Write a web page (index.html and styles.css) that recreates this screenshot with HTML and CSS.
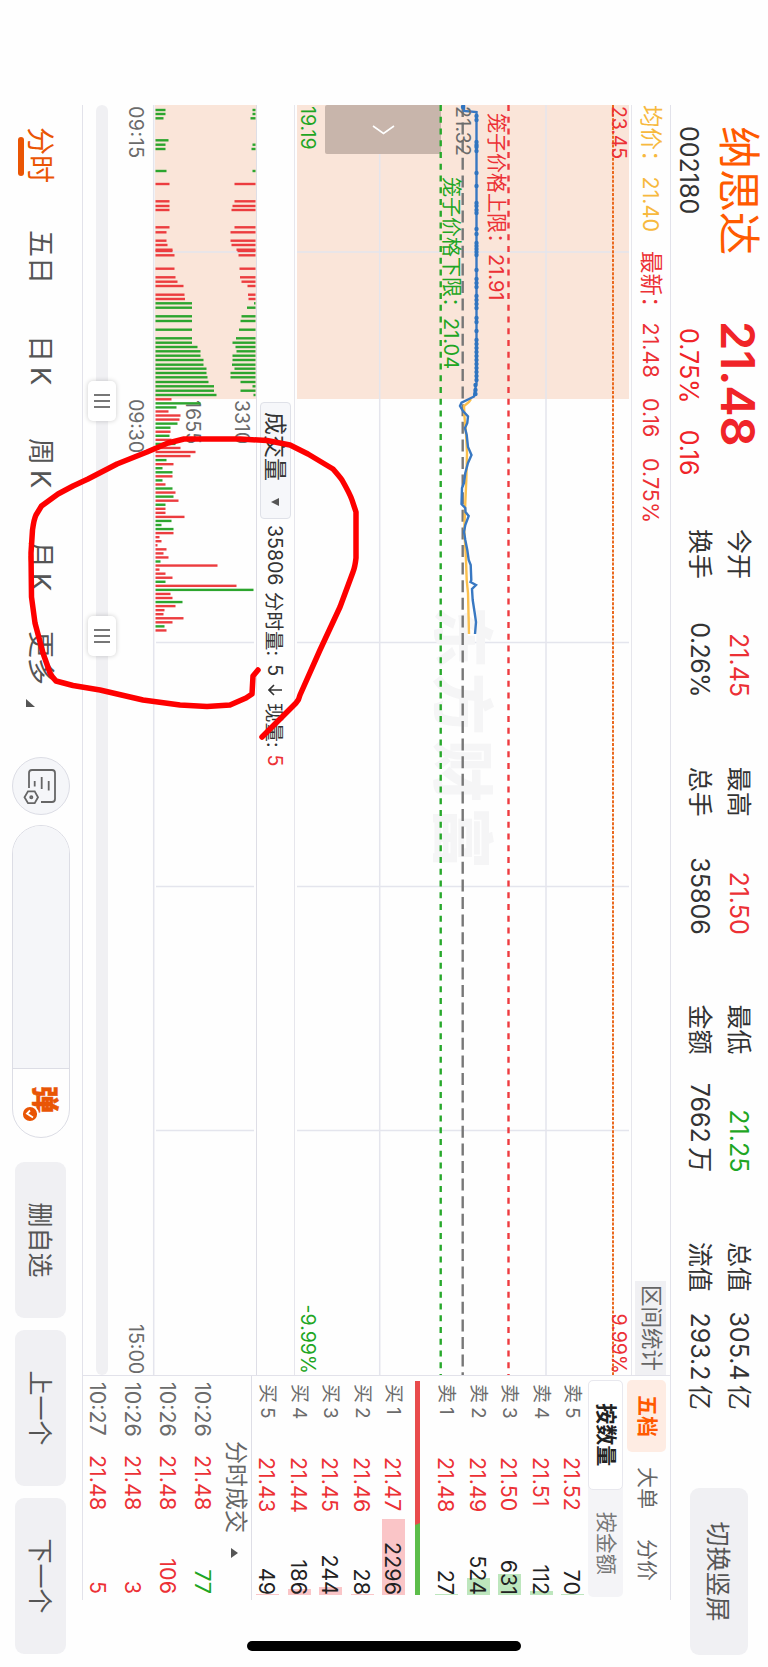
FILE: index.html
```html
<!DOCTYPE html>
<html lang="zh-CN">
<head>
    <meta charset="UTF-8">
    <meta name="viewport" content="width=device-width, initial-scale=1.0">
    <title>纳思达 002180</title>
    <link rel="stylesheet" href="styles.css">
</head>
<body>
    <!-- Landscape screen, turned to fit the portrait page -->
    <div class="screen">
        <header class="header">
            <div class="stock">
                <div class="name">纳思达</div>
                <div class="code">002180</div>
            </div>
            <div class="quote">
                <div class="price">21.48</div>
                <div class="change"><span>0.75%</span><span>0.16</span></div>
            </div>
            <div class="stats">
                <div class="stat"><span>今开</span><span class="red">21.45</span></div>
                <div class="stat"><span>最高</span><span class="red">21.50</span></div>
                <div class="stat"><span>最低</span><span class="green">21.25</span></div>
                <div class="stat"><span>总值</span><span>305.4&thinsp;亿</span></div>
                <div class="stat"><span>换手</span><span class="rate">0.26%</span></div>
                <div class="stat"><span>总手</span><span>35806</span></div>
                <div class="stat"><span>金额</span><span>7662&thinsp;万</span></div>
                <div class="stat"><span>流值</span><span>293.2&thinsp;亿</span></div>
            </div>
            <button class="switchButton">切换竖屏</button>
        </header>

        <main class="main">
            <section class="charts">
                <div class="infoRow">
                    <span class="avg">均价：<b>21.40</b></span>
                    <span class="last">最新：<b>21.48</b></span>
                    <span class="diff">0.16</span>
                    <span class="percent">0.75%</span>
                    <button class="rangeButton">区间统计</button>
                </div>

                <svg class="priceChart" viewBox="105 137 1270 336" width="1270" height="336">
                    <rect x="105" y="139" width="294" height="332" fill="#fae5d9"/>
                    <g class="grid">
                        <path d="M105 222H1375M105 388.3H1375M252 139V471M642.5 139V471M886.5 139V471M1130.5 139V471"/>
                    </g>
                    <text class="watermark" x="606" y="329">东方财富</text>
                    <rect x="105" y="327" width="49" height="116" rx="2" fill="#c8b5ab"/>
                    <path d="M126 374L133.500 384.500L126 395" fill="none" stroke="#fff" stroke-width="1.600"/>
                    <path d="M105 155H1375" stroke="#ea6a1f" stroke-width="2" stroke-dasharray="3 1.400"/>
                    <path d="M105 259.500H1375" stroke="#ee3b3f" stroke-width="2.400" stroke-dasharray="6 5.750"/>
                    <path d="M105 305.300H1375" stroke="#777" stroke-width="2.400" stroke-dasharray="12 5.600"/>
                    <path d="M105 327.300H1375" stroke="#27a82b" stroke-width="2.400" stroke-dasharray="6 5.750"/>
                    <polyline id="avgLine" fill="none" stroke="#fbc04e" stroke-width="2.400"/>
                    <polyline id="priceLine" fill="none" stroke="#3878c2" stroke-width="2.400"/>
                    <g id="priceDots" fill="#2f74c0"></g>
                    <g class="axis">
                        <text class="red" x="106" y="156" textLength="53">23.45</text>
                        <text class="red" x="1374" y="156" text-anchor="end">9.99%</text>
                        <text class="gray" x="106" y="312" textLength="50">21.32</text>
                        <text class="green" x="106" y="467">19.19</text>
                        <text class="green" x="1374" y="467" text-anchor="end">-9.99%</text>
                    </g>
                    <text class="red limit" x="113" y="279">笼子价格上限：</text>
                    <text class="red limit" x="254" y="279">21.91</text>
                    <text class="green limit" x="177" y="324">笼子价格下限：</text>
                    <text class="green limit" x="318" y="324">21.04</text>
                </svg>

                <div class="volumeRow">
                    <button class="indicator">成交量 <i class="down"></i></button>
                    <span class="total">35806</span>
                    <span>分时量:</span>
                    <span class="minute">5</span>
                    <svg width="12" height="14" viewBox="0 0 12 14"><path d="M6 0V13M1 8L6 13L11 8" fill="none" stroke="#333" stroke-width="1.600"/></svg>
                    <span class="now">现量:</span>
                    <span class="red">5</span>
                </div>

                <svg class="volumeChart" viewBox="105 512 1270 140" width="1270" height="140">
                    <rect x="105" y="512" width="294" height="101" fill="#fae5d9"/>
                    <g class="grid">
                        <path d="M252 514V612M642.5 514V612M886.5 514V612M1130.5 514V612"/>
                        <path d="M105 614.3H1375" stroke-width="1.300"/>
                    </g>
                    <g class="axis">
                        <text class="gray" x="400" y="533" textLength="44">3310</text>
                        <text class="gray" x="400" y="582" textLength="44">1655</text>
                        <text class="gray" x="106" y="639" textLength="52">09:15</text>
                        <text class="gray" x="399" y="639" textLength="54">09:30</text>
                        <text class="gray" x="1374" y="639" text-anchor="end">15:00</text>
                    </g>
                    <g id="volumeBars"></g>
                </svg>

                <div class="slider">
                    <div class="track"></div>
                    <div class="handle handleStart"><i></i><i></i><i></i></div>
                    <div class="handle handleEnd"><i></i><i></i><i></i></div>
                </div>
            </section>

            <aside class="panel">
                <div class="panelTabs">
                    <span class="active">五档</span>
                    <span>大单</span>
                    <span>分价</span>
                </div>
                <div class="toggle">
                    <span class="active">按数量</span>
                    <span>按金额</span>
                </div>
                <div class="book" id="sellBook"></div>
                <div class="ratio"><div class="ratioBuy"></div></div>
                <div class="book" id="buyBook"></div>
                <div class="tradesTitle">分时成交 <i class="up"></i></div>
                <div class="trades">
                    <div class="trade"><span>10:26</span><span class="red">21.48</span><span class="green">77</span></div>
                    <div class="trade"><span>10:26</span><span class="red">21.48</span><span class="red">106</span></div>
                    <div class="trade"><span>10:26</span><span class="red">21.48</span><span class="red">3</span></div>
                    <div class="trade"><span>10:27</span><span class="red">21.48</span><span class="red">5</span></div>
                </div>
            </aside>
        </main>

        <footer class="toolbar">
            <nav class="periods">
                <span class="active">分时</span>
                <span class="fiveDays">五日</span>
                <span>日&thinsp;K</span>
                <span>周&thinsp;K</span>
                <span>月&thinsp;K</span>
                <span class="more">更多</span>
                <svg class="corner" width="8" height="9" viewBox="0 0 8 9"><path d="M8 0V9H0Z" fill="#555"/></svg>
            </nav>
            <div class="settings">
                <svg width="44" height="44" viewBox="-22 -22 44 44" fill="none" stroke="#666" stroke-width="1.800">
                    <path d="M2 12H-13Q-16 12 -16 9V-11Q-16 -14 -13 -14H13Q16 -14 16 -11V0"/>
                    <path d="M-5 -7.700H4.500M-9 -0.700H3M-5 6.300H0.500"/>
                    <path d="M11.300 3L17.200 6.300V13L11.300 16.500L5.400 13V6.300Z"/>
                    <circle cx="11.300" cy="9.700" r="1.100"/>
                </svg>
            </div>
            <div class="comment">
                <div class="commentInput"></div>
                <div class="danmu">
                    <span>弹</span>
                    <svg class="danmuBadge" width="18" height="18" viewBox="-9 -9 18 18">
                        <circle r="8" fill="#e95505" stroke="#fff" stroke-width="1.800"/>
                        <path d="M-3.500 0L-0.500 3L3.500 -3" fill="none" stroke="#fff" stroke-width="1.800"/>
                    </svg>
                </div>
            </div>
            <div class="actions">
                <button>删自选</button>
                <button>上一个</button>
                <button>下一个</button>
            </div>
        </footer>

        <div class="homeBar"></div>
    </div>

    <!-- Hand drawn circle round the volume -->
    <svg class="pen" width="768" height="1667" viewBox="0 0 768 1667">
        <path d="M258 670L253 676L252 694L246 698L230 705L207 706.500L180 705L143 700L100 690L73 685.500L56 681Q52 677 50 673L43 653L35 623L31.500 597L31 553L32.500 530Q34 519 36 515L41.500 506L58 494L73 486L88 479L117 464L147 452L168 443L184 439H240L267 440.500L290 445L308 454L333 469Q340 477 342 480Q350 494 352 500L356 512V558Q355 567 353 572L340 607L320 650L300 695Q299 700 296 703L262 737"/>
    </svg>

    <script>
        const RED = "#ec3c3f";
        const GREEN = "#2ca52e";

        // [x, matched volume, unmatched volume], a minus sign means green
        const auction = [
            [110, -10, -3], [114, -10, -3], [118.3, -8, -5], [140.3, -13, 0], [144.7, -10, -3], [149, -10, -4], [171, -11, -3],
            [184, 14, 21], [201.3, 14, 21], [206, 14, 23], [210, 14, 24], [227.3, 14, 21], [232.3, 11, 25],
            [240.7, 11, 25], [245, 12, 24], [249.7, 17, 19], [251, 17, 18], [255.3, 19, 17], [268.7, 19, 16], [277.3, 20, 15.500],
            [281.7, 22, 14], [286, 28, 8], [294.7, 29, 7.500], [299, 29.500, 7], [303.3, -36.500, -1.500],
            [307.7, -36.500, -8.500], [316.3, -36.500, -14], [321, -36.500, -15], [329.7, -36.500, -16.500],
            [338.3, -36.500, -19.500], [342.7, -36.500, -23], [347, -42, -20], [351.3, -45, -19], [355.7, -45, -23],
            [360, -48, -23], [364.7, -48, -23.500], [368.7, -51, -21], [373, -51, -25], [377.3, -52, -25],
            [382, -53, -15], [386.3, -58.500, -3], [390.7, -58.500, -15], [395, -61, -2]
        ];
        // One value per minute from 09:30
        const minutes = [
            16, -45, -21, 13, 25, 24, -22, -15, 15, -14, 16, -20, 25, 40, 35, -11, 18, -7, -17, 17,
            -7, 10, -17, 20, -18, 23, -10, 10, 10, 29, -16, -6, -18, 18, 4, 6, 2, 11, 8, 13,
            -5, 62, 4, 10, 17, -10, 81, -98, 15, 17, -27, 20, 9, 8, 28, 17, -9, 11
        ];

        const priceLine = [
            [105, 304], [111, 304], [112, 291.5], [383, 291.5], [390, 293], [396.5, 294], [399, 299], [402.7, 306.5],
            [406, 308], [411, 305], [416.5, 300], [423, 300.7], [428, 303], [435, 301.3], [447, 300], [455, 296.5],
            [463, 300], [473, 302.7], [483, 304], [488, 306], [504, 306.5], [508, 302.7], [512, 302.5], [516, 299.3],
            [525, 302.7], [532, 304], [540, 302.7], [550, 300.7], [560, 299.3], [565, 297.3], [580, 296.7],
            [582, 297.5], [585, 292], [589, 296], [600, 295.3], [613, 293.3], [622, 292], [634, 293]
        ];
        const avgLine = [
            [399, 297], [402, 299], [406, 304], [417, 303.5], [433, 302], [453, 301], [480, 301.7], [503, 302.7], [530, 303.7],
            [560, 302], [580, 301.3], [593, 300], [634, 299]
        ];
        const dots = [
            107, 116, 120, 142, 145, 147, 151, 173, 186, 203, 206, 210, 213, 229, 234, 243, 246, 249, 252, 255, 270,
            279, 283, 287, 296, 300, 304, 308, 318, 322, 331, 340, 344, 348, 352, 356, 360, 364, 368, 372, 376, 380, 385, 390, 394
        ];

        const sells = [
            ["卖5", "21.52", 70, 1.5], ["卖4", "21.51", 112, 4], ["卖3", "21.50", 631, 21],
            ["卖2", "21.49", 524, 17], ["卖1", "21.48", 27, 1]
        ];
        const buys = [
            ["买1", "21.47", 2296, 76], ["买2", "21.46", 28, 1], ["买3", "21.45", 244, 8],
            ["买4", "21.44", 186, 6], ["买5", "21.43", 49, 1.5]
        ];

        function bar(x, y, height, color) {
            return `<rect x="${x - 1.2}" y="${y}" width="2.4" height="${height}" fill="${color}"/>`;
        }

        function drawVolume() {
            let html = "";
            auction.forEach(([x, matched, rest]) => {
                const color = matched < 0 ? GREEN : RED;
                html += bar(x, 612.5 - Math.abs(matched), Math.abs(matched), color);
                html += bar(x, 512.5, Math.abs(rest), color);
            });
            minutes.forEach((value, index) => {
                const height = Math.abs(value);
                html += bar(399.3 + index * 4.055, 612.5 - height, height, value < 0 ? GREEN : RED);
            });
            document.getElementById("volumeBars").innerHTML = html;
        }

        function drawPrice() {
            document.getElementById("priceLine").setAttribute("points", priceLine.join(" "));
            document.getElementById("avgLine").setAttribute("points", avgLine.join(" "));
            document.getElementById("priceDots").innerHTML = dots.map((x) => {
                const y = x < 112 ? 305 : x > 384 ? 292.5 : 291.5;
                return `<circle cx="${x}" cy="${y}" r="2.2"/>`;
            }).join("");
        }

        function drawBook(id, rows, side) {
            document.getElementById(id).innerHTML = rows.map(([label, price, amount, width]) => `
                <div class="bookRow">
                    <span class="level">${label[0]}<em>${label[1]}</em></span>
                    <span class="red">${price}</span>
                    <span class="amount"><i class="${side}" style="width: ${width}px"></i>${amount}</span>
                </div>`).join("");
        }

        drawVolume();
        drawPrice();
        drawBook("sellBook", sells, "sell");
        drawBook("buyBook", buys, "buy");
    </script>
</body>
</html>
```
FILE: styles.css
```css
* {
    box-sizing: border-box;
}

body {
    margin: 0;
    width: 768px;
    height: 1667px;
    position: relative;
    overflow: hidden;
    background-color: #fefefe;
    color: #333;
    font-family: Inter, "Noto Sans CJK SC", sans-serif;
}

button {
    border: none;
    padding: 0 0 3px;
    font-family: inherit;
    color: #555;
    background-color: #f0f0f3;
    border-radius: 9px;
    white-space: nowrap;
}

i, em, b {
    font-style: normal;
    font-weight: normal;
}

/* Quarter turn clockwise */
.screen {
    width: 1667px;
    height: 768px;
    display: flex;
    flex-direction: column;
    transform-origin: 0 0;
    transform: matrix(0, 1, -1, 0, 768, 0);
    position: absolute;
    left: 0;
    top: 0;
}

.red {
    color: #ec3035;
    fill: #ec3035;
}

.green {
    color: #1fa624;
    fill: #1fa624;
}

.gray {
    fill: #6b6b6b;
}

/* Header */
.header {
    height: 97px;
    padding-left: 126px;
    display: flex;
    font-size: 25px;
    white-space: nowrap;
}

.stock {
    width: 195px;
}

.name {
    height: 60px;
    line-height: 59px;
    font-size: 43px;
    color: #ff5a00;
}

.code {
    line-height: 38px;
}

.quote {
    width: 208px;
    color: #f02428;
}

.price {
    height: 60px;
    line-height: 59px;
    font-size: 47px;
    font-weight: 600;
}

.change {
    padding-left: 7px;
    line-height: 38px;
    display: flex;
    gap: 26px;
}

.stats {
    display: grid;
    grid-template-columns: repeat(4, 168px);
    grid-template-rows: 39px 39px;
    column-gap: 69.700px;
    padding-top: 10px;
    width: 959px;
}

.stat {
    display: flex;
    justify-content: space-between;
    line-height: 39px;
}

.rate {
    letter-spacing: -0.600px;
}

.switchButton {
    width: 167px;
    height: 58px;
    margin-top: 20px;
    font-size: 25px;
}

/* Charts */
.main {
    margin-left: 105px;
    width: 1495px;
    height: 589px;
    display: flex;
    border-top: 1px solid #e2e2ea;
    border-bottom: 1px solid #e2e2ea;
}

.charts {
    width: 1270px;
}

.charts svg {
    display: block;
}

.infoRow {
    height: 39px;
    display: flex;
    align-items: center;
    line-height: 34px;
    border-bottom: 1px solid #e6e6ec;
    font-size: 21.500px;
    white-space: nowrap;
    color: #ec3035;
}

.infoRow b {
    margin-left: 4px;
    font-size: 21.500px;
}

.avg {
    width: 146px;
    font-size: 22.500px;
    color: #f7b93e;
}

.last {
    width: 147px;
    font-size: 22.500px;
}

.diff {
    width: 60px;
}

.infoRow .rangeButton {
    margin-left: auto;
    width: 94px;
    height: 31px;
    line-height: 29px;
    padding-bottom: 2px;
    border-radius: 0;
    font-size: 21.500px;
    color: #666;
}

.grid path {
    fill: none;
    stroke: #e4e5ed;
    stroke-width: 1.500px;
}

.axis {
    font-size: 19.500px;
}

.limit {
    font-size: 20px;
}

.watermark {
    font-size: 62px;
    font-weight: 900;
    letter-spacing: 5px;
    fill: #f5f5f6;
}

.volumeRow {
    height: 39px;
    padding-left: 297px;
    display: flex;
    align-items: center;
    border-top: 1px solid #e6e6ec;
    border-bottom: 1px solid #dedee6;
    font-size: 19.500px;
    white-space: nowrap;
}

.indicator {
    width: 117px;
    height: 31px;
    padding-left: 9px;
    display: flex;
    align-items: center;
    gap: 17px;
    font-size: 23px;
    color: #333;
    background-color: #f6f7fa;
    border: 1px solid #dfe1e8;
    border-radius: 4px;
}

.down {
    margin-top: 3px;
    border: 4px solid transparent;
    border-top: 8px solid #555;
    border-bottom: 0;
}

.up {
    margin-top: 3px;
    border: 5px solid transparent;
    border-bottom: 7px solid #555;
    border-top: 0;
}

.total {
    width: 67px;
    margin-left: 6px;
}

.minute {
    margin: 0 8px;
}

.now {
    margin: 0 7px;
}

.slider {
    position: relative;
    height: 33px;
    padding-top: 8px;
}

.track {
    height: 12px;
    border-radius: 6px;
    background-color: #f0f0f3;
}

.handle {
    position: absolute;
    top: 0;
    width: 40px;
    height: 28px;
    display: flex;
    align-items: center;
    justify-content: center;
    gap: 4px;
    background-color: #fff;
    border-radius: 5px;
    box-shadow: 0 0 5px rgba(0, 0, 0, 0.2);
}

.handle i {
    width: 2px;
    height: 16px;
    background-color: #777;
}

.handleStart {
    left: 276px;
}

.handleEnd {
    left: 511px;
}

/* Order book */
.panel {
    width: 225px;
    padding: 4px 0 0 4px;
    border-left: 1px solid #e2e2ea;
    font-size: 21px;
    white-space: nowrap;
}

.panelTabs {
    display: flex;
    height: 39px;
    line-height: 38px;
    color: #666;
}

.panelTabs span {
    width: 72px;
    text-align: center;
}

.panelTabs .active {
    color: #ff5a00;
    font-weight: bold;
    background-color: #feece3;
    border-radius: 5px;
}

.toggle {
    margin-top: 4px;
    display: flex;
    width: 217px;
    height: 35px;
    line-height: 34px;
    text-align: center;
    background-color: #f4f4f7;
    border-radius: 5px;
    color: #777;
}

.toggle span {
    flex: 1;
}

.toggle .active {
    font-weight: bold;
    color: #222;
    background-color: #fff;
    border: 1px solid #e8e8ee;
    line-height: 32px;
    border-radius: 5px;
}

.book {
    width: 215px;
}

.bookRow {
    height: 31.400px;
    line-height: 32px;
    display: flex;
    font-size: 21.500px;
}

.level {
    width: 77px;
    padding-left: 4px;
    font-size: 19px;
    color: #6b6b6b;
}

.level em {
    margin-left: 4px;
}

.amount {
    flex: 1;
    position: relative;
    text-align: right;
    color: #222;
}

/* Bar behind the amount */
.amount i {
    position: absolute;
    z-index: -1;
    right: 0;
    top: 4px;
    height: 23px;
}

.sell {
    background-color: #bde6bd;
}

.buy {
    background-color: #fac5c7;
}

.ratio {
    margin: 11px 0 6px 1px;
    width: 214px;
    height: 5px;
    background-color: #5cbd4a;
}

.ratioBuy {
    width: 144px;
    height: 5px;
    background-color: #ea4a4c;
    clip-path: polygon(0 0, 142px 0, 144px 5px, 0 5px);
}

.tradesTitle {
    margin-left: -4px;
    height: 32px;
    padding: 0 0 1px 65px;
    display: flex;
    align-items: center;
    gap: 15px;
    border-top: 1px solid #dedee6;
    font-size: 23px;
    line-height: 30px;
    color: #666;
}

.trade {
    width: 214px;
    height: 35px;
    line-height: 35px;
    padding-left: 2px;
    display: flex;
    font-size: 21.500px;
}

.trade span:first-child {
    width: 73px;
    color: #6b6b6b;
}

.trade span:last-child {
    margin-left: auto;
}

/* Toolbar */
.toolbar {
    height: 82px;
    padding-left: 127px;
    display: flex;
    align-items: center;
    font-size: 27px;
    color: #555;
    white-space: nowrap;
}

.periods {
    width: 630px;
    display: flex;
    align-items: center;
}

.periods span {
    width: 103px;
    padding-bottom: 3px;
}

.periods .fiveDays {
    width: 105px;
}

.periods .more {
    width: 68px;
    margin-left: -13px;
}

.periods .active {
    position: relative;
    font-size: 28px;
    width: 103px;
    color: #ea5504;
}

.periods .active::after {
    content: "";
    position: absolute;
    left: 10px;
    bottom: -1px;
    width: 39px;
    height: 6px;
    border-radius: 3px;
    background-color: #ea5504;
}

.corner {
    margin-top: 21px;
}

.settings {
    width: 58px;
    height: 58px;
    display: flex;
    align-items: center;
    justify-content: center;
    border: 1px solid #dcdde5;
    border-radius: 50%;
    background-color: #f5f6f9;
}

.comment {
    margin: 0 24px 0 10px;
    width: 313px;
    height: 58px;
    display: flex;
    border: 1px solid #dcdde5;
    border-radius: 29px;
    overflow: hidden;
}

.commentInput {
    width: 243px;
    background-color: #f5f6f9;
    border-right: 1px solid #dcdde5;
}

.danmu {
    position: relative;
    padding-left: 17px;
    line-height: 50px;
    font-weight: 900;
    color: #e95505;
    -webkit-text-stroke: 0.500px #e95505;
}

.danmuBadge {
    position: absolute;
    left: 36px;
    top: 30px;
}

.actions {
    display: flex;
    gap: 12px;
}

.actions button {
    width: 156px;
    height: 51px;
    font-size: 25px;
}

.homeBar {
    position: absolute;
    left: 1641px;
    top: 247px;
    width: 10px;
    height: 274px;
    border-radius: 5px;
    background-color: #000;
}

.pen {
    position: absolute;
    left: 0;
    top: 0;
}

.pen path {
    fill: none;
    stroke: #fe0000;
    stroke-width: 5.500px;
    stroke-linecap: round;
    stroke-linejoin: round;
}
```
